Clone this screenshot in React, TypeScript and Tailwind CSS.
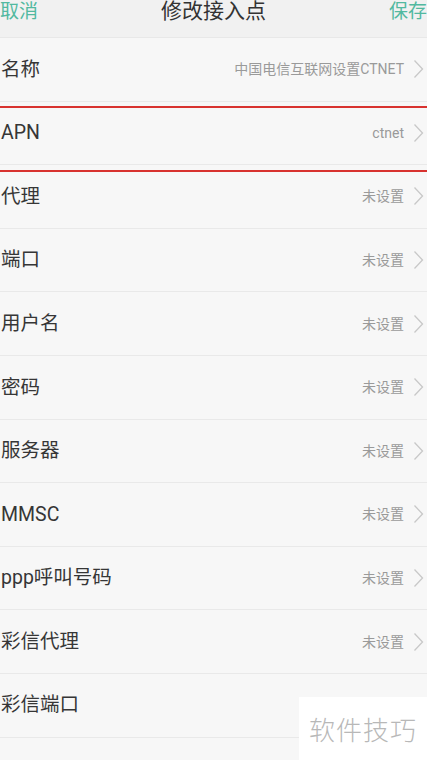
import React from "react";

const rows = [
    { label: "名称", value: "中国电信互联网设置CTNET" },
    { label: "APN", value: "ctnet" },
    { label: "代理", value: "未设置" },
    { label: "端口", value: "未设置" },
    { label: "用户名", value: "未设置" },
    { label: "密码", value: "未设置" },
    { label: "服务器", value: "未设置" },
    { label: "MMSC", value: "未设置" },
    { label: "ppp呼叫号码", value: "未设置" },
    { label: "彩信代理", value: "未设置" },
    { label: "彩信端口", value: "" },
];

const font = "font-['Roboto','Noto_Sans_CJK_SC',sans-serif]";

function Chevron() {
    return (
        <svg width="11" height="20" viewBox="0 0 11 20" className="shrink-0">
            <path d="M1.5 1.5 L9.5 10 L1.5 18.5" fill="none" stroke="#c8c8c8" strokeWidth="1.3" />
        </svg>
    );
}

export default function App() {
    return (
        <div className={`relative w-[427px] h-[760px] overflow-hidden bg-[#f7f7f7] ${font}`}>
            {/* Header */}
            <div className="flex items-center justify-between h-[38px] pb-[14px] bg-[#f1f1f1] border-b border-[#e8e8e8]">
                <span className="text-[19px] text-[#52b9a0] leading-none">取消</span>
                <span className="text-[21px] text-[#333] leading-none">修改接入点</span>
                <span className="text-[19px] text-[#52b9a0] leading-none">保存</span>
            </div>

            {/* Rows */}
            <div className="flex flex-col">
                {rows.map((row) => (
                    <div
                        key={row.label}
                        className="flex items-center justify-between h-[63.6px] border-b border-[#e9e9e9] pr-[3px]"
                    >
                        <span className="text-[19.5px] text-[#363636] leading-none pl-[1px]">{row.label}</span>
                        {row.value && (
                            <div className="flex items-center gap-[9px]">
                                <span className="text-[14px] text-[#9a9a9a] leading-none">{row.value}</span>
                                <Chevron />
                            </div>
                        )}
                    </div>
                ))}
            </div>

            {/* Red annotation box */}
            <div className="absolute left-0 right-0 top-[106px] h-[66px] border-y-2 border-[#d8322f]" />

            {/* Watermark */}
            <div className="absolute right-0 bottom-0 w-[128px] h-[63px] bg-white flex items-center justify-center">
                <span className="text-[26px] text-[#b8b8b8] tracking-[1px] font-['Noto_Sans_CJK_SC',sans-serif] font-light">软件技巧</span>
            </div>
        </div>
    );
}
